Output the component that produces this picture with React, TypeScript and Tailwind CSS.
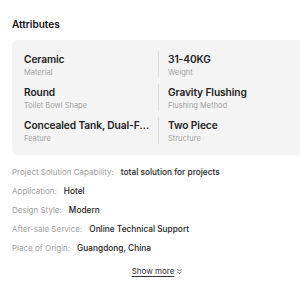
import { ChevronsDown } from "lucide-react";

const attributes = [
  { value: "Ceramic", label: "Material" },
  { value: "31-40KG", label: "Weight" },
  { value: "Round", label: "Toilet Bowl Shape" },
  { value: "Gravity Flushing", label: "Flushing Method" },
  { value: "Concealed Tank, Dual-Flush", label: "Feature" },
  { value: "Two Piece", label: "Structure" },
];

const details = [
  { key: "Project Solution Capability", value: "total solution for projects" },
  { key: "Application", value: "Hotel" },
  { key: "Design Style", value: "Modern" },
  { key: "After-sale Service", value: "Online Technical Support" },
  { key: "Place of Origin", value: "Guangdong, China" },
];

export default function App() {
  return (
    <div className="w-[300px] h-[287px] overflow-hidden bg-white font-['Inter',sans-serif] text-[#222]">
      <section className="pl-3 pt-[17px] w-[316px]">
        <h2 className="text-[10px] leading-[14px] font-semibold text-[#111]">Attributes</h2>

        {/* Highlighted attributes grid */}
        <div className="mt-[9px] w-[292px] rounded-md bg-[#f4f4f4] px-3 pt-[11px] pb-[11px] grid grid-cols-2 gap-y-[6px]">
          {attributes.map((a, i) => (
            <div
              key={a.label}
              className={i % 2 === 1 ? "border-l border-[#e0e0e0] pl-[9px] min-w-0" : "pr-2 min-w-0"}
            >
              <div className="text-[10.2px] leading-4 font-semibold tracking-[-0.1px] truncate">{a.value}</div>
              <div className="text-[7.5px] leading-[11px] text-[#a3a3a3] truncate">{a.label}</div>
            </div>
          ))}
        </div>

        {/* Other attributes */}
        <ul className="mt-[11px] flex flex-col gap-[7px] w-[292px]">
          {details.map((d) => (
            <li key={d.key} className="text-[8px] leading-3 flex gap-[7px]">
              <span className="text-[#a0a0a0]">{d.key}:</span>
              <span className="text-[8.3px] font-medium text-[#222]">{d.value}</span>
            </li>
          ))}
        </ul>

        <div className="mt-[11px] w-[292px] flex justify-center">
          <button className="flex items-center gap-[1px] text-[8px] leading-3 text-[#333]">
            <span className="underline underline-offset-2">Show more</span>
            <ChevronsDown size={9} strokeWidth={1.5} />
          </button>
        </div>
      </section>
    </div>
  );
}
